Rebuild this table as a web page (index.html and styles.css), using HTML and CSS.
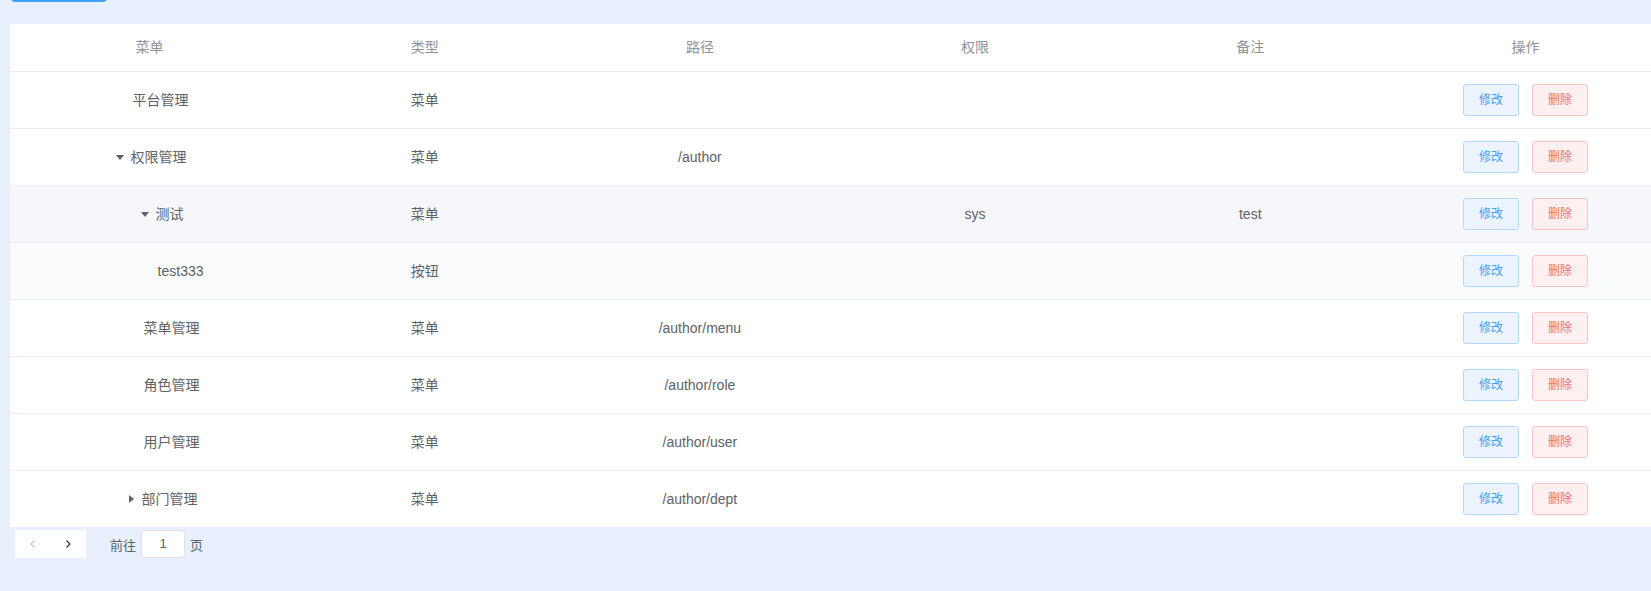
FILE: index.html
```html
<!DOCTYPE html>
<html lang="zh-CN">
<head>
<meta charset="utf-8">
<title>菜单管理</title>
<link rel="stylesheet" href="styles.css">
</head>
<body>
<div class="page">
  <div class="toolbar"><button class="btn-primary" aria-label="新增"></button></div>

  <div class="table">
    <div class="row head">
      <div class="cell">菜单</div>
      <div class="cell">类型</div>
      <div class="cell">路径</div>
      <div class="cell">权限</div>
      <div class="cell">备注</div>
      <div class="cell">操作</div>
    </div>

    <div class="row">
      <div class="cell"><span class="ph"></span>平台管理</div>
      <div class="cell">菜单</div>
      <div class="cell"></div>
      <div class="cell"></div>
      <div class="cell"></div>
      <div class="cell ops"><button class="btn edit">修改</button><button class="btn del">删除</button></div>
    </div>

    <div class="row">
      <div class="cell"><span class="exp"><span class="caret down"></span></span>权限管理</div>
      <div class="cell">菜单</div>
      <div class="cell">/author</div>
      <div class="cell"></div>
      <div class="cell"></div>
      <div class="cell ops"><button class="btn edit">修改</button><button class="btn del">删除</button></div>
    </div>

    <div class="row hover">
      <div class="cell"><span class="indent l1"></span><span class="exp"><span class="caret down"></span></span>测试</div>
      <div class="cell">菜单</div>
      <div class="cell"></div>
      <div class="cell">sys</div>
      <div class="cell">test</div>
      <div class="cell ops"><button class="btn edit">修改</button><button class="btn del">删除</button></div>
    </div>

    <div class="row soft">
      <div class="cell"><span class="indent l2"></span><span class="ph"></span>test333</div>
      <div class="cell">按钮</div>
      <div class="cell"></div>
      <div class="cell"></div>
      <div class="cell"></div>
      <div class="cell ops"><button class="btn edit">修改</button><button class="btn del">删除</button></div>
    </div>

    <div class="row">
      <div class="cell"><span class="indent l1"></span><span class="ph"></span>菜单管理</div>
      <div class="cell">菜单</div>
      <div class="cell">/author/menu</div>
      <div class="cell"></div>
      <div class="cell"></div>
      <div class="cell ops"><button class="btn edit">修改</button><button class="btn del">删除</button></div>
    </div>

    <div class="row">
      <div class="cell"><span class="indent l1"></span><span class="ph"></span>角色管理</div>
      <div class="cell">菜单</div>
      <div class="cell">/author/role</div>
      <div class="cell"></div>
      <div class="cell"></div>
      <div class="cell ops"><button class="btn edit">修改</button><button class="btn del">删除</button></div>
    </div>

    <div class="row">
      <div class="cell"><span class="indent l1"></span><span class="ph"></span>用户管理</div>
      <div class="cell">菜单</div>
      <div class="cell">/author/user</div>
      <div class="cell"></div>
      <div class="cell"></div>
      <div class="cell ops"><button class="btn edit">修改</button><button class="btn del">删除</button></div>
    </div>

    <div class="row">
      <div class="cell"><span class="indent l1"></span><span class="exp"><span class="caret right"></span></span>部门管理</div>
      <div class="cell">菜单</div>
      <div class="cell">/author/dept</div>
      <div class="cell"></div>
      <div class="cell"></div>
      <div class="cell ops"><button class="btn edit">修改</button><button class="btn del">删除</button></div>
    </div>
  </div>

  <div class="pagination">
    <div class="pager-btns">
      <button class="pbtn disabled" aria-label="上一页">
        <svg width="12" height="12" viewBox="0 0 12 12"><path d="M7.5 2.5 L4 6 L7.5 9.5" fill="none" stroke="currentColor" stroke-width="1.2"/></svg>
      </button>
      <button class="pbtn" aria-label="下一页">
        <svg width="12" height="12" viewBox="0 0 12 12"><path d="M4.5 2.5 L8 6 L4.5 9.5" fill="none" stroke="currentColor" stroke-width="1.2"/></svg>
      </button>
    </div>
    <span class="jumper">前往<span class="jump-input">1</span>页</span>
  </div>
</div>
</body>
</html>
```

FILE: styles.css
```css
html, body {
  margin: 0;
  padding: 0;
  overflow: hidden;
  background: #e8f0fe;
  font-family: "Liberation Sans", "Noto Sans CJK SC", Arial, sans-serif;
  color: #606266;
}

.page {
  padding-left: 10px;
  width: 1655px;
}

.toolbar {
  height: 2px;
  overflow: hidden;
  display: flex;
  align-items: flex-end;
  padding-left: 1px;
  margin-bottom: 22px;
}

.btn-primary {
  flex: none;
  width: 96px;
  height: 32px;
  border: 0;
  border-radius: 4px;
  background: #409eff;
}

.table {
  background: #fff;
  width: 1651px;
  padding-left: 2px;
}

.row {
  display: grid;
  grid-template-columns: repeat(6, 1fr);
  height: 56px;
  border-bottom: 1px solid #ebeef5;
  align-items: center;
  font-size: 14px;
  margin-left: -2px;
  padding-left: 2px;
}

.row:last-child {
  border-bottom: 0;
}

.row.head {
  height: 47px;
  color: #909399;
}

.row.hover {
  background: #f5f7fa;
}

.row.soft {
  background: #fafbfd;
}

.cell {
  display: flex;
  align-items: center;
  justify-content: center;
  padding: 0 10px;
  line-height: 23px;
  white-space: nowrap;
}

.indent.l1 { display: inline-block; width: 22px; flex: none; }
.indent.l2 { display: inline-block; width: 40px; flex: none; }

.ph {
  display: inline-block;
  flex: none;
  width: 22px;
  height: 20px;
}

.exp {
  display: inline-flex;
  flex: none;
  align-items: center;
  justify-content: flex-start;
  width: 18px;
  height: 20px;
}

.caret {
  display: block;
  width: 0;
  height: 0;
}

.caret.down {
  margin-left: 3px;
  border-left: 4px solid transparent;
  border-right: 4px solid transparent;
  border-top: 5px solid #606266;
}

.caret.right {
  margin-left: 5px;
  border-top: 4px solid transparent;
  border-bottom: 4px solid transparent;
  border-left: 5px solid #606266;
}

.ops {
  gap: 13px;
}

.btn {
  width: 56px;
  height: 32px;
  padding: 0;
  font-size: 12px;
  font-family: inherit;
  border-radius: 3px;
  border: 1px solid;
  line-height: 1;
}

.btn.edit {
  background: #ecf5ff;
  border-color: #b3d8ff;
  color: #409eff;
}

.btn.del {
  background: #fef0f0;
  border-color: #fbc4c4;
  color: #f56c6c;
}

.pagination {
  display: flex;
  align-items: center;
  padding: 3px 5px;
  height: 28px;
}

.pager-btns {
  display: flex;
  background: #fff;
}

.pbtn {
  width: 35.5px;
  height: 28px;
  border: 0;
  padding: 0;
  background: #fff;
  color: #303133;
  display: flex;
  align-items: center;
  justify-content: center;
}

.pbtn.disabled {
  color: #c0c4cc;
}

.jumper {
  margin-left: 24px;
  font-size: 13px;
  color: #606266;
  display: flex;
  align-items: center;
}

.jump-input {
  width: 42px;
  height: 26px;
  margin: 0 5px 0 5px;
  border: 1px solid #dcdfe6;
  border-radius: 3px;
  background: #fff;
  text-align: center;
  line-height: 26px;
  font-size: 13px;
}
```
